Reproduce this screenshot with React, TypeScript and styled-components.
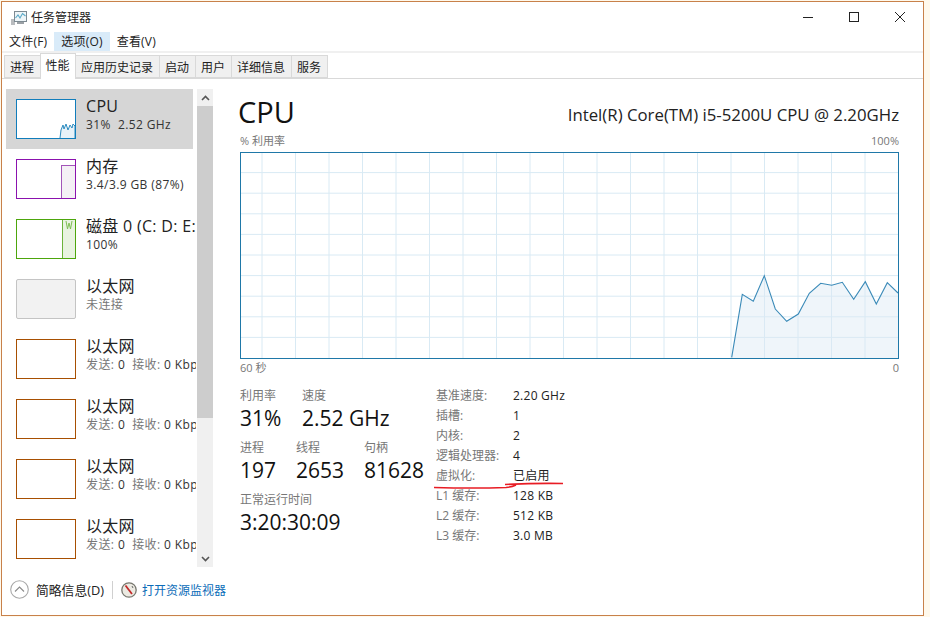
import React from 'react';
import styled, { createGlobalStyle } from 'styled-components';

const GlobalStyle = createGlobalStyle`
  * { box-sizing: border-box; }
  html, body { margin: 0; padding: 0; background: #fff9ec; }
  body {
    font-family: "Open Sans", "Noto Sans CJK SC", sans-serif;
    color: #1a1a1a;
  }
`;

const tabs = ['进程', '性能', '应用历史记录', '启动', '用户', '详细信息', '服务'];
const menus = ['文件(F)', '选项(O)', '查看(V)'];

const details = [
  ['基准速度:', '2.20 GHz'],
  ['插槽:', '1'],
  ['内核:', '2'],
  ['逻辑处理器:', '4'],
  ['虚拟化:', '已启用'],
  ['L1 缓存:', '128 KB'],
  ['L2 缓存:', '512 KB'],
  ['L3 缓存:', '3.0 MB'],
];

const cpuPoints: [number, number][] = [
  [491.7, 205.3], [502.3, 142.3], [513.3, 149.3], [524.3, 123.7], [535.3, 157],
  [546.7, 169.3], [558.3, 162], [569.3, 141.3], [580.7, 131.3], [591.7, 133.3],
  [602.3, 130.3], [613.7, 147.3], [625.3, 129.7], [636.3, 152], [647.3, 130.7], [658, 141],
];

const CpuGraph = () => {
  const line = cpuPoints.map((p) => p.join(',')).join(' ');
  const vertical = Array.from({ length: 19 }, (_, i) => 22 + i * 33.5);
  const horizontal = Array.from({ length: 9 }, (_, i) => 20.6 * (i + 1));
  return (
    <GraphSvg viewBox="0 0 659 207" width="659" height="207">
      <rect x="0" y="0" width="659" height="207" fill="#fff" />
      {vertical.map((x) => (
        <line key={x} x1={x} x2={x} y1="0" y2="207" stroke="#d9eaf4" strokeWidth="1" />
      ))}
      {horizontal.map((y) => (
        <line key={y} x1="0" x2="659" y1={y} y2={y} stroke="#d9eaf4" strokeWidth="1" />
      ))}
      <polygon points={`${line} 658,206 491.7,206`} fill="#dbe8f3" fillOpacity="0.45" />
      <polyline points={line} fill="none" stroke="#3a8ab8" strokeWidth="1.1" />
      <rect x="0.5" y="0.5" width="658" height="206" fill="none" stroke="#1f78a8" strokeWidth="1" />
    </GraphSvg>
  );
};

const AppIcon = () => (
  <svg width="17" height="17" viewBox="0 0 17 17">
    <rect x="1" y="10" width="4" height="6" fill="#b9bcbf" />
    <rect x="4.5" y="2.5" width="12" height="10" fill="#eef5f8" stroke="#7d8a92" />
    <polyline points="5.5,9 8,6 10,9 12.5,4.5 15.5,7" fill="none" stroke="#5aa9c8" strokeWidth="1.1" />
    <rect x="7" y="13" width="7" height="2" fill="#9aa0a5" />
  </svg>
);

const Minimize = () => (
  <svg width="12" height="12" viewBox="0 0 12 12">
    <line x1="1" x2="11" y1="6.5" y2="6.5" stroke="#222" />
  </svg>
);
const Maximize = () => (
  <svg width="12" height="12" viewBox="0 0 12 12">
    <rect x="1.5" y="1.5" width="9" height="9" fill="none" stroke="#222" />
  </svg>
);
const CloseIcon = () => (
  <svg width="12" height="12" viewBox="0 0 12 12">
    <path d="M1 1 L11 11 M11 1 L1 11" stroke="#222" fill="none" />
  </svg>
);

const Chevron = ({ down }: { down?: boolean }) => (
  <svg width="9" height="6" viewBox="0 0 9 6">
    <path d={down ? 'M1 1 L4.5 4.5 L8 1' : 'M1 5 L4.5 1.5 L8 5'} stroke="#555" strokeWidth="1.6" fill="none" />
  </svg>
);

const CollapseIcon = () => (
  <svg width="19" height="19" viewBox="0 0 19 19">
    <circle cx="9.5" cy="9.5" r="8.8" fill="#fff" stroke="#a8a8a8" strokeWidth="1.1" />
    <path d="M5 11.5 L9.5 7 L14 11.5" stroke="#8a8a8a" strokeWidth="1.1" fill="none" />
  </svg>
);

const MonitorIcon = () => (
  <svg width="16" height="16" viewBox="0 0 16 16">
    <circle cx="8" cy="8" r="7.2" fill="#eceae2" stroke="#77776f" strokeWidth="1.3" />
    <path d="M4.5 3.5 L11 12" stroke="#c22a2a" strokeWidth="1.8" />
    <path d="M11 4 L12 6" stroke="#666" strokeWidth="1" />
  </svg>
);

const App = () => {
  return (
    <>
      <GlobalStyle />
      <Window>
        <TitleBar>
          <TitleLeft>
            <AppIcon />
            <TitleText>任务管理器</TitleText>
          </TitleLeft>
          <WindowControls>
            <ControlButton><Minimize /></ControlButton>
            <ControlButton><Maximize /></ControlButton>
            <ControlButton><CloseIcon /></ControlButton>
          </WindowControls>
        </TitleBar>

        <MenuBar>
          {menus.map((m, i) => (
            <MenuItem key={m} $active={i === 1}>{m}</MenuItem>
          ))}
        </MenuBar>

        <TabStrip>
          {tabs.map((t, i) => (
            <Tab key={t} $selected={i === 1}>{t}</Tab>
          ))}
        </TabStrip>

        <Content>
          <SideColumn>
            <SideList>
              <SideItem $selected>
                <Thumb $color="#117dbb">
                  <ThumbSvg viewBox="0 0 58 38">
                    <polyline
                      points="43,38 44,30 46,25 47,29 49,24 51,30 53,25 55,28 56,24 58,26 58,38"
                      fill="#e8f2f8"
                      stroke="#2d8cc0"
                      strokeWidth="1"
                    />
                  </ThumbSvg>
                </Thumb>
                <SideText>
                  <SideTitle>CPU</SideTitle>
                  <SideSub>31%&nbsp; 2.52 GHz</SideSub>
                </SideText>
              </SideItem>
              <SideItem>
                <Thumb $color="#8b12ae">
                  <ThumbSvg viewBox="0 0 58 38">
                    <rect x="44.5" y="5.5" width="14" height="33" fill="#f4f0f5" stroke="#a254b8" strokeWidth="1" />
                  </ThumbSvg>
                </Thumb>
                <SideText>
                  <SideTitle>内存</SideTitle>
                  <SideSub>3.4/3.9 GB (87%)</SideSub>
                </SideText>
              </SideItem>
              <SideItem>
                <Thumb $color="#4da60c">
                  <ThumbSvg viewBox="0 0 58 38">
                    <rect x="45.5" y="-1" width="13" height="40" fill="#e8f3e0" stroke="#6bb33a" strokeWidth="1" />
                    <polyline points="49,1 50.5,9 52,3 53.5,9 55,1" fill="none" stroke="#7fbf55" strokeWidth="1" />
                  </ThumbSvg>
                </Thumb>
                <SideText>
                  <SideTitle>磁盘 0 (C: D: E:</SideTitle>
                  <SideSub>100%</SideSub>
                </SideText>
              </SideItem>
              <SideItem>
                <Thumb $color="#c4c4c4" $fill="#f2f2f2" $round />
                <SideText>
                  <SideTitle>以太网</SideTitle>
                  <SideSub $muted>未连接</SideSub>
                </SideText>
              </SideItem>
              {[0, 1, 2, 3].map((i) => (
                <SideItem key={i}>
                  <Thumb $color="#a74f01" />
                  <SideText>
                    <SideTitle>以太网</SideTitle>
                    <SideSub>
                      <Muted>发送:</Muted> 0&nbsp; <Muted>接收:</Muted> 0 Kbps
                    </SideSub>
                  </SideText>
                </SideItem>
              ))}
            </SideList>
            <ScrollBar>
              <ScrollButton><Chevron /></ScrollButton>
              <ScrollThumb />
              <ScrollButton><Chevron down /></ScrollButton>
            </ScrollBar>
          </SideColumn>

          <Main>
            <Header>
              <BigTitle>CPU</BigTitle>
              <Model>Intel(R) Core(TM) i5-5200U CPU @ 2.20GHz</Model>
            </Header>
            <Caption $height={17} $line={11}>
              <span>% 利用率</span>
              <span>100%</span>
            </Caption>
            <CpuGraph />
            <Caption $height={20} $line={17}>
              <span>60 秒</span>
              <span>0</span>
            </Caption>

            <Stats>
              <StatColumn>
                <StatRow>
                  <Stat $width={62}><StatLabel>利用率</StatLabel><StatValue>31%</StatValue></Stat>
                  <Stat><StatLabel>速度</StatLabel><StatValue>2.52 GHz</StatValue></Stat>
                </StatRow>
                <StatRow>
                  <Stat $width={56}><StatLabel>进程</StatLabel><StatValue>197</StatValue></Stat>
                  <Stat $width={68}><StatLabel>线程</StatLabel><StatValue>2653</StatValue></Stat>
                  <Stat><StatLabel>句柄</StatLabel><StatValue>81628</StatValue></Stat>
                </StatRow>
                <StatRow>
                  <Stat><StatLabel>正常运行时间</StatLabel><StatValue>3:20:30:09</StatValue></Stat>
                </StatRow>
              </StatColumn>
              <Details>
                {details.map(([k, v]) => (
                  <React.Fragment key={k}>
                    <DetailKey>{k}</DetailKey>
                    <DetailValue>{v}</DetailValue>
                  </React.Fragment>
                ))}
                <RedMarks width="134" height="10" viewBox="0 0 134 10">
                  <path d="M0 7.5 Q40 8.5 72 7.5 Q78 7 82 5" stroke="#e81c24" strokeWidth="1.6" fill="none" />
                  <path d="M71 4.5 Q100 3 129 3.5" stroke="#e81c24" strokeWidth="1.6" fill="none" />
                </RedMarks>
              </Details>
            </Stats>
          </Main>
        </Content>

        <Footer>
          <CollapseIcon />
          <FooterLabel>简略信息(D)</FooterLabel>
          <FooterDivider />
          <MonitorIcon />
          <FooterLink>打开资源监视器</FooterLink>
        </Footer>
      </Window>
    </>
  );
};

export default App;

const Window = styled.div`
  margin: 1px 0 0 1px;
  width: 923px;
  height: 615px;
  background: #fff;
  border: 1px solid #c8814a;
  display: flex;
  flex-direction: column;
  overflow: hidden;
`;

const TitleBar = styled.div`
  height: 30px;
  display: flex;
  justify-content: space-between;
  flex-shrink: 0;
`;

const TitleLeft = styled.div`
  display: flex;
  align-items: center;
  gap: 4px;
  padding-left: 8px;
`;

const TitleText = styled.span`
  font-size: 12px;
  color: #222;
`;

const WindowControls = styled.div`
  display: flex;
`;

const ControlButton = styled.div`
  width: 46px;
  height: 29px;
  display: flex;
  align-items: center;
  justify-content: center;
`;

const MenuBar = styled.div`
  height: 19px;
  display: flex;
  flex-shrink: 0;
  font-size: 12px;
  letter-spacing: 0.2px;
`;

const MenuItem = styled.div<{ $active?: boolean }>`
  padding: 0 7px;
  line-height: 20px;
  background: ${(p) => (p.$active ? '#d9ebf9' : 'transparent')};
  color: #222;
`;

const TabStrip = styled.div`
  height: 28px;
  display: flex;
  align-items: flex-end;
  padding-left: 2.5px;
  border-top: 2px solid #f0f0f0;
  border-bottom: 1px solid #d9d9d9;
  flex-shrink: 0;
`;

const Tab = styled.div<{ $selected?: boolean }>`
  height: ${(p) => (p.$selected ? '26px' : '23px')};
  margin-bottom: ${(p) => (p.$selected ? '-1px' : '0')};
  padding: ${(p) => (p.$selected ? '0 5px 3px' : '0 5.5px')};
  display: flex;
  align-items: center;
  font-size: 12px;
  color: #222;
  background: ${(p) => (p.$selected ? '#fff' : '#f0f0f0')};
  border: 1px solid #d9d9d9;
  border-bottom: ${(p) => (p.$selected ? 'none' : '1px solid #d9d9d9')};
  margin-left: -1px;
  position: relative;
  z-index: ${(p) => (p.$selected ? 1 : 0)};
`;

const Content = styled.div`
  height: 488px;
  flex-shrink: 0;
  display: flex;
  padding: 10px 0 0 4px;
`;

const SideColumn = styled.div`
  display: flex;
  gap: 1px;
  height: 478px;
  flex-shrink: 0;
`;

const SideList = styled.div`
  width: 190px;
  height: 478px;
  overflow: hidden;
`;

const SideItem = styled.div<{ $selected?: boolean }>`
  width: 187px;
  height: 60px;
  padding: 0 0 0 10px;
  display: flex;
  align-items: center;
  gap: 10px;
  background: ${(p) => (p.$selected ? '#d6d6d6' : 'transparent')};
`;

const Thumb = styled.div<{ $color: string; $fill?: string; $round?: boolean }>`
  width: 60px;
  height: 40px;
  flex-shrink: 0;
  border: 1px solid ${(p) => p.$color};
  background: ${(p) => p.$fill ?? '#fff'};
  border-radius: ${(p) => (p.$round ? '2px' : '0')};
  overflow: hidden;
`;

const ThumbSvg = styled.svg`
  display: block;
  width: 58px;
  height: 38px;
`;

const SideText = styled.div`
  display: flex;
  flex-direction: column;
  white-space: nowrap;
  padding-bottom: 10px;
`;

const SideTitle = styled.div`
  font-size: 16px;
  line-height: 21px;
  letter-spacing: 0.3px;
  color: #222;
`;

const SideSub = styled.div<{ $muted?: boolean }>`
  font-size: 12px;
  line-height: 16px;
  letter-spacing: 0.4px;
  color: ${(p) => (p.$muted ? '#777' : '#333')};
`;

const Muted = styled.span`
  color: #777;
`;

const ScrollBar = styled.div`
  width: 16px;
  height: 478px;
  background: #f0f0f0;
  display: flex;
  flex-direction: column;
  justify-content: space-between;
`;

const ScrollButton = styled.div`
  height: 17px;
  display: flex;
  align-items: center;
  justify-content: center;
`;

const ScrollThumb = styled.div`
  width: 16px;
  height: 312px;
  background: #cdcdcd;
  margin-bottom: auto;
`;

const Main = styled.div`
  width: 659px;
  margin-left: 27px;
  display: flex;
  flex-direction: column;
  flex-shrink: 0;
`;

const Header = styled.div`
  height: 46px;
  display: flex;
  justify-content: space-between;
  align-items: center;
`;

const BigTitle = styled.div`
  font-size: 29px;
  line-height: 44px;
  margin-left: -2px;
  color: #111;
`;

const Model = styled.div`
  font-size: 16.8px;
  color: #222;
  margin-top: 5px;
`;

const Caption = styled.div<{ $height: number; $line: number }>`
  height: ${(p) => p.$height}px;
  display: flex;
  justify-content: space-between;
  align-items: flex-start;
  font-size: 11px;
  line-height: ${(p) => p.$line}px;
  color: #777;
`;

const GraphSvg = styled.svg`
  display: block;
  flex-shrink: 0;
`;

const Stats = styled.div`
  display: flex;
  margin-top: 7px;
`;

const StatColumn = styled.div`
  width: 196px;
  display: flex;
  flex-direction: column;
  gap: 7px;
`;

const StatRow = styled.div`
  display: flex;
`;

const Stat = styled.div<{ $width?: number }>`
  width: ${(p) => (p.$width ? `${p.$width}px` : 'auto')};
  display: flex;
  flex-direction: column;
  white-space: nowrap;
`;

const StatLabel = styled.div`
  font-size: 12px;
  line-height: 20px;
  color: #777;
`;

const StatValue = styled.div`
  font-size: 21px;
  line-height: 25px;
  color: #111;
`;

const Details = styled.div`
  position: relative;
  display: grid;
  grid-template-columns: 77px auto;
  grid-auto-rows: 20px;
  justify-content: start;
  font-size: 12px;
  line-height: 20px;
`;

const DetailKey = styled.div`
  color: #777;
`;

const DetailValue = styled.div`
  color: #222;
  letter-spacing: 0.25px;
`;

const RedMarks = styled.svg`
  position: absolute;
  left: -2px;
  top: 94px;
`;

const Footer = styled.div`
  flex: 1;
  display: flex;
  align-items: center;
  padding: 0 0 3px 8px;
`;

const FooterLabel = styled.span`
  font-size: 12.8px;
  color: #222;
  margin-left: 7px;
`;

const FooterDivider = styled.div`
  width: 1px;
  height: 18px;
  background: #d0d0d0;
  margin: 0 8px 0 8px;
`;

const FooterLink = styled.span`
  font-size: 12px;
  color: #0b6cb8;
  margin-left: 5px;
`;
